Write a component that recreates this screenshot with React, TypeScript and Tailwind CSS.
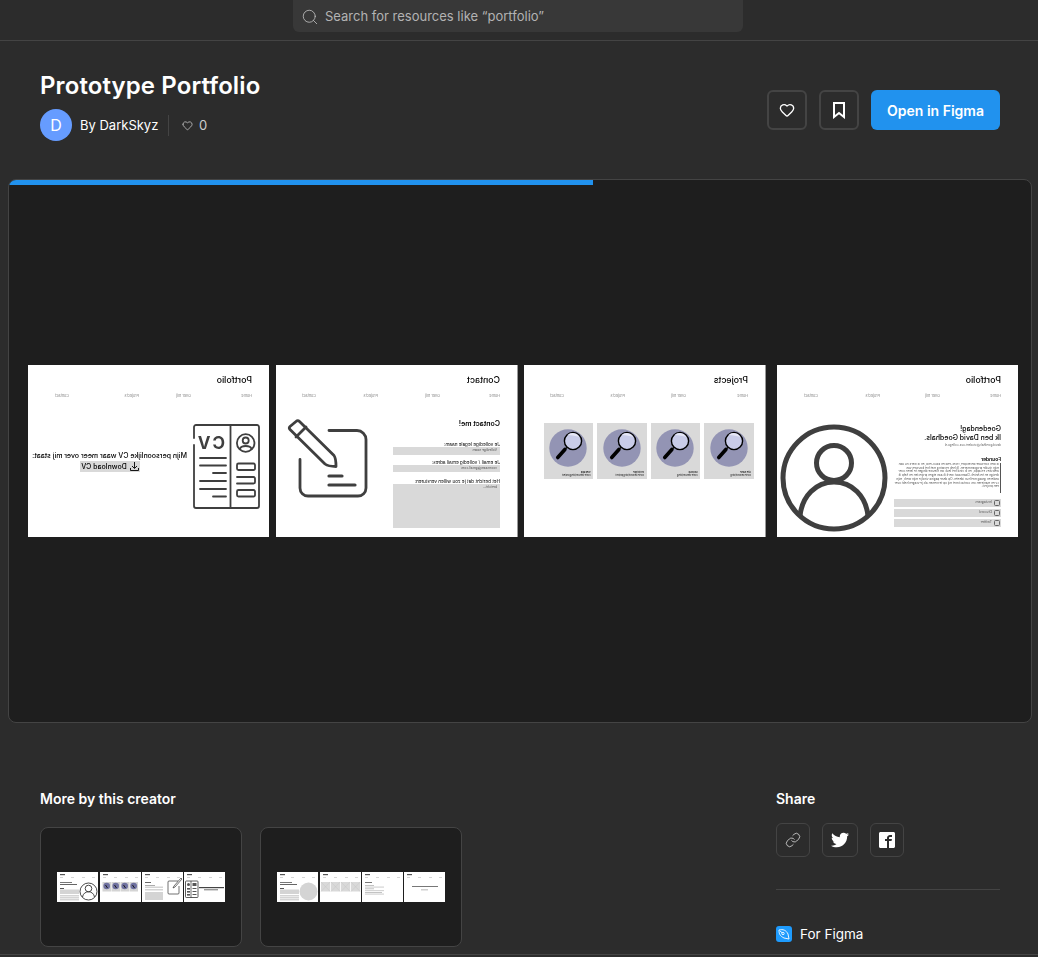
import React from "react";
import { Search, Heart, Link as LinkIcon } from "lucide-react";
import { FaTwitter } from "react-icons/fa";
import { ImFacebook2 } from "react-icons/im";

const Nav = ({ items, widths }: { items: string[]; widths: number[] }) => (
  <div className="flex mt-[7px] text-[3.800px] leading-[5px] text-[#888] blur-[0.25px]">
    {items.map((t, i) => (
      <div key={t} style={{ width: widths[i] }}>{t}</div>
    ))}
  </div>
);

const Slide = ({ title, widths, edge, children, items }: { title: string; widths: number[]; edge?: boolean; children: React.ReactNode; items: string[] }) => (
  <div className={`h-[172px] shrink-0 bg-white -scale-x-100 flex flex-col pt-[9px] pl-[17px] text-black overflow-hidden ${edge ? "border-l border-[#9a9a9a] w-[242px]" : "w-[241px]"}`}>
    <div className="text-[8.800px] leading-[12px] font-medium blur-[0.15px]">{title}</div>
    <Nav items={items} widths={widths} />
    {children}
  </div>
);

const CvIcon = () => (
  <svg viewBox="0 0 67 85" className="w-[67px] h-[85px] shrink-0" fill="none" stroke="#3f3f3f" strokeWidth="1.800" strokeLinecap="round">
    <path d="M66 14V3a2 2 0 0 0-2-2H3a2 2 0 0 0-2 2v79a2 2 0 0 0 2 2h61a2 2 0 0 0 2-2V21" />
    <path d="M29.500 1v83" />
    <circle cx="14.300" cy="19" r="8.800" />
    <circle cx="14.300" cy="16.500" r="3" />
    <path d="M8.500 25c1-4 10.500-4 11.600 0" />
    <rect x="5" y="39.500" width="18" height="6.500" rx="1.500" />
    <path d="M23 53h-16.500a1.500 1.500 0 0 0-1.500 1.500v3.500a1.500 1.500 0 0 0 1.500 1.500H23" />
    <rect x="5" y="66" width="18" height="6.500" rx="1.500" />
    <path d="M34 34h26M34 41.500h26M34 49h13M34 57h26M34 65h26M34 72.500h13" />
    <text x="35" y="25" fill="#3f3f3f" stroke="none" fontSize="17" fontWeight="700" letterSpacing="2" fontFamily="Inter, sans-serif">CV</text>
  </svg>
);

const NoteIcon = () => (
  <svg viewBox="0 0 81 80" className="w-[81px] h-[80px] shrink-0" fill="none" stroke="#3f3f3f" strokeWidth="2.800" strokeLinecap="round" strokeLinejoin="round">
    <path d="M39 11.500H11a9 9 0 0 0-9 9V69a8 8 0 0 0 8 8h50a8 8 0 0 0 8-8V40.500" />
    <path d="M13 66h26M26 57h13" strokeWidth="3.200" />
    <path d="M68.500 2.500 34 36.500c-1.500 2-2 7-2 11 4 0 9-1 11-2.500L78 10.500c1-1 1-2 0-3l-6-5c-1-1-2.500-1-3.500 0Z" />
    <path d="m62 8 10 10" />
  </svg>
);

const PersonIcon = () => (
  <svg viewBox="0 0 108 108" className="w-[108px] h-[108px] shrink-0" fill="none" stroke="#3f3f3f" strokeWidth="5">
    <circle cx="54" cy="54" r="51" />
    <circle cx="54" cy="39" r="17.500" />
    <path d="M20 92c2-20 16-34 34-34s32 14 34 34" />
  </svg>
);

const ProjectCard = ({ a, b }: { a: string; b: string }) => (
  <div className="w-[49.500px] h-[56px] bg-[#d9d9d9] flex flex-col shrink-0">
    <svg viewBox="0 0 49.500 45" className="w-[49.500px] h-[45px] shrink-0">
      <circle cx="25" cy="25" r="18.700" fill="#9394b4" />
      <circle cx="20" cy="18" r="8.600" fill="#c9cce9" stroke="#000" strokeWidth="1.400" />
      <path d="M13.500 14a8 8 0 0 1 12-2c-5 0-8 1-12 2Z" fill="#e6e7f6" />
      <path d="m26 24.500 2 1.500" stroke="#000" strokeWidth="1.500" />
      <path d="m28 26.500 5 9.500" stroke="#000" strokeWidth="3.600" strokeLinecap="round" transform="rotate(-14 28 26)" />
    </svg>
    <div className="pl-[3px] mt-[4px] text-[2.300px] leading-[2.700px] text-black blur-[0.15px]">
      <div className="font-medium">{a}</div>
      <div>{b}</div>
    </div>
  </div>
);

const Field = ({ label, value, h, gap }: { label: string; value: string; h: string; gap: string }) => (
  <div className={gap}>
    <div className="text-[4.700px] leading-[6px] blur-[0.2px]">{label}</div>
    <div className={`bg-[#d9d9d9] w-[107px] ${h} text-[3.400px] leading-[7px] pl-[3px] text-[#555] blur-[0.2px]`}>{value}</div>
  </div>
);

const Wide = ({ label }: { label: string }) => (
  <div className="w-[107px] h-[8px] bg-[#d9d9d9] flex items-center gap-[2px] text-[3.500px] text-[#555] mb-[2px] pl-[1px] blur-[0.2px]">
    <span className="w-[6px] h-[6px] rounded-[1.500px] border-[0.5px] border-[#666] shrink-0" />
    {label}
  </div>
);

const Thumb = ({ children }: { children: React.ReactNode }) => (
  <svg viewBox="0 0 41 30" className="w-[41px] h-[30px] shrink-0 bg-white" fill="none">
    <rect x="3" y="2" width="5" height="1.200" fill="#555" />
    <rect x="3" y="5" width="3" height=".6" fill="#bbb" />
    <rect x="14" y="5" width="3" height=".6" fill="#bbb" />
    <rect x="25" y="5" width="3" height=".6" fill="#bbb" />
    <rect x="35" y="5" width="3" height=".6" fill="#bbb" />
    {children}
  </svg>
);

const TextBlock = () => (
  <>
    <rect x="3" y="10" width="12" height="1" fill="#777" />
    <rect x="3" y="12" width="17" height="1" fill="#666" />
    <rect x="3" y="16" width="4" height="1" fill="#555" />
    <rect x="3" y="17.500" width="19" height="4.500" fill="#d4d4d4" />
    <rect x="3" y="23" width="19" height="1.500" fill="#d4d4d4" />
    <rect x="3" y="25" width="19" height="1.500" fill="#d4d4d4" />
    <rect x="3" y="27" width="19" height="1.500" fill="#d4d4d4" />
  </>
);

const Row1 = () => (
  <div className="flex">
    <div className="mr-[2px]">
      <Thumb>
        <TextBlock />
        <circle cx="31.500" cy="19.500" r="8.500" stroke="#333" strokeWidth=".9" />
        <circle cx="31.500" cy="16.500" r="3.300" stroke="#333" strokeWidth=".9" />
        <path d="M25.500 25c1-7 11-7 12 0" stroke="#333" strokeWidth=".9" />
      </Thumb>
    </div>
    <div className="mr-[1px]">
      <Thumb>
        {[2.500, 11.500, 20.500, 29.500].map((x) => (
          <g key={x}>
            <rect x={x} y="10" width="8.500" height="9.500" fill="#d4d4d4" />
            <circle cx={x + 4.200} cy="14" r="3.300" fill="#6f71a0" />
            <path d={`M${x + 3} ${13}l2 3`} stroke="#111" strokeWidth=".9" />
          </g>
        ))}
      </Thumb>
    </div>
    <div className="mr-[1px]">
      <Thumb>
        <rect x="3" y="10" width="6" height="1" fill="#666" />
        <rect x="3" y="13" width="10" height=".7" fill="#888" />
        <rect x="3" y="14.500" width="18" height="1.500" fill="#d4d4d4" />
        <rect x="3" y="17" width="18" height="1.500" fill="#d4d4d4" />
        <rect x="3" y="20" width="18" height="8" fill="#d4d4d4" />
        <path d="M36 9h-9a1 1 0 0 0-1 1v11a1 1 0 0 0 1 1h9a1 1 0 0 0 1-1v-7" stroke="#333" strokeWidth=".7" />
        <path d="M39 6l-7 8-1 2 2-1 7-8Z" stroke="#333" strokeWidth=".7" />
      </Thumb>
    </div>
    <Thumb>
      <rect x="1.500" y="9" width="12.500" height="16.500" rx=".8" stroke="#333" strokeWidth=".8" />
      <path d="M7 9v16.500" stroke="#333" strokeWidth=".7" />
      <rect x="3" y="11" width="3" height="3" rx="1.500" fill="#555" />
      <rect x="3" y="16" width="3" height="1.600" fill="#555" />
      <rect x="3" y="19" width="3" height="1.600" fill="#555" />
      <rect x="3" y="22" width="3" height="1.600" fill="#555" />
      <rect x="8.500" y="11" width="4" height="3" fill="#555" />
      <rect x="8.500" y="16" width="4" height="1" fill="#555" />
      <rect x="8.500" y="19" width="4" height="1" fill="#555" />
      <rect x="8.500" y="22" width="4" height="1" fill="#555" />
      <rect x="15" y="15" width="25" height="1.200" fill="#444" />
      <rect x="20" y="17" width="14" height="1.400" fill="#999" />
    </Thumb>
  </div>
);

const Row2 = () => (
  <div className="flex">
    <div className="mr-[2px]">
      <Thumb>
        <TextBlock />
        <circle cx="31.500" cy="19.500" r="9" fill="#d4d4d4" />
      </Thumb>
    </div>
    <div className="mr-[1px]">
      <Thumb>
        {[1, 11, 21, 31].map((x) => (
          <g key={x}>
            <rect x={x} y="10" width="9.200" height="9.500" fill="#d9d9d9" />
            <path d={`M${x} 10l9.200 9.500M${x + 9.200} 10l-9.200 9.500`} stroke="#bbb" strokeWidth=".3" />
          </g>
        ))}
      </Thumb>
    </div>
    <div className="mr-[1px]">
      <Thumb>
        <rect x="3" y="10" width="7" height="1" fill="#777" />
        <rect x="3" y="13" width="9" height=".7" fill="#aaa" />
        <rect x="3" y="14.500" width="19" height="1.200" fill="#d4d4d4" />
        <rect x="3" y="16.500" width="9" height=".7" fill="#aaa" />
        <rect x="3" y="18" width="19" height="1.200" fill="#d4d4d4" />
        <rect x="3" y="20" width="17" height=".7" fill="#aaa" />
        <rect x="3" y="21.500" width="19" height="1.200" fill="#d4d4d4" />
      </Thumb>
    </div>
    <Thumb>
      <rect x="8" y="14" width="26" height="1" fill="#777" />
      <rect x="17" y="17" width="7" height="1.500" fill="#cfcfcf" />
    </Thumb>
  </div>
);

const CreatorCard = ({ children }: { children: React.ReactNode }) => (
  <div className="w-[202px] h-[120px] rounded-lg border border-[#444] bg-[#1e1e1e] flex items-center justify-center">
    {children}
  </div>
);

const ShareBtn = ({ w, children }: { w: string; children: React.ReactNode }) => (
  <div className={`${w} h-[34px] rounded-md border border-[#444] flex items-center justify-center text-white`}>{children}</div>
);

const NAV = ["Home", "Over mij", "Projects", "Contact"];

export default function App() {
  return (
    <div className="w-[1038px] h-[957px] overflow-hidden bg-[#2c2c2c]">
      <div className="w-[1040px] h-[957px] font-['Inter',sans-serif] text-white flex flex-col">
        <header className="h-[41px] shrink-0 border-b border-[#444] flex pl-[293px]">
          <div className="w-[450px] h-[32px] bg-[#383838] rounded-b-md flex items-center pl-[8px] pt-[1px] gap-[6px] text-[13px] text-[#b3b3b3]">
            <Search size={18} strokeWidth={1} className="text-[#ccc]" />
            <span>Search for resources like “portfolio”</span>
          </div>
        </header>

        <section className="px-10 flex justify-between items-start pt-[29px]">
          <div>
            <h1 className="text-[24px] leading-[32px] font-semibold tracking-[0.1px]">Prototype Portfolio</h1>
            <div className="flex items-center mt-[7px] h-[32px]">
              <div className="w-[32px] h-[32px] rounded-full bg-[#669cff] flex items-center justify-center text-[16px]">D</div>
              <span className="ml-[8px] w-[77px] whitespace-nowrap text-[13px] pt-[1px]">By DarkSkyz</span>
              <span className="ml-[11px] w-px h-[21px] bg-[#444]" />
              <Heart size={11} strokeWidth={1.500} className="ml-[13px] text-[#ddd]" />
              <span className="ml-[6px] text-[13px] pt-[1px] text-[#ccc]">0</span>
            </div>
          </div>
          <div className="flex gap-3 mt-[20px]">
            <div className="w-[40px] h-[40px] rounded-md border-2 border-[#444] flex items-center justify-center">
              <Heart size={16} strokeWidth={2} />
            </div>
            <div className="w-[40px] h-[40px] rounded-md border-2 border-[#444] flex items-center justify-center">
              <svg width="12" height="17" viewBox="0 0 12 17" fill="none" stroke="#fff" strokeWidth="2">
                <path d="M1 1h10v14l-5-4-5 4Z" />
              </svg>
            </div>
            <div className="w-[129px] h-[40px] rounded-md bg-[#2192ee] flex items-center justify-center text-[14px] font-semibold">Open in Figma</div>
          </div>
        </section>

        <section className="mx-2 mt-[38px] h-[544px] shrink-0 rounded-lg border border-[#444] bg-[#1e1e1e] overflow-hidden flex flex-col">
          <div className="h-[5px] w-[584px] bg-[#2192ee] shrink-0" />
          <div className="flex-1 flex items-center pl-[19px] pb-[5px]">
            <div className="mr-[7px]">
              <Slide title="Portfolio" items={NAV} widths={[61, 52, 70, 30]}>
                <div className="flex items-start mt-[26px] -ml-[8px]">
                  <CvIcon />
                  <div className="ml-[6px] mt-[26px] w-[154px] text-center text-[7px] font-medium leading-[11px] whitespace-nowrap blur-[0.2px]">
                    <div>Mijn persoonlijke CV waar meer over mij staat:</div>
                    <div className="mx-auto w-[60px] h-[11px] bg-[#d9d9d9] flex items-center justify-center gap-[3px]">
                      <svg width="9" height="9" viewBox="0 0 9 9" fill="none" stroke="#000" strokeWidth=".9"><path d="M4.500 0v6M2 4l2.500 2.500L7 4M.5 6v2.500h8V6" /></svg>
                      Download CV
                    </div>
                  </div>
                </div>
              </Slide>
            </div>
            <div className="mr-[6px]">
              <Slide edge title="Contact" items={NAV} widths={[60, 62, 62, 30]}>
                <div className="flex items-start mt-[14px]">
                  <div className="w-[107px] mr-[-2px]">
                    <div className="text-[7px] leading-[10px] font-semibold mt-[7px] mb-[12px] blur-[0.15px]">Contact me!</div>
                    <Field gap="mb-[4px]" label="Je volledige legale naam:" value="Volledige naam" h="h-[8px]" />
                    <Field gap="mb-[6px]" label="Je email / volledig email adres:" value="voornaam@gmail.com" h="h-[7px]" />
                    <Field gap="mb-0" label="Het bericht dat je zou willen versturen:" value="bericht..." h="h-[44px]" />
                  </div>
                  <div className="ml-[27px] mt-[7px]"><NoteIcon /></div>
                </div>
              </Slide>
            </div>
            <div className="mr-[11px]">
              <Slide edge title="Projects" items={NAV} widths={[62, 61, 61, 30]}>
                <div className="flex gap-[4px] mt-[25px] -ml-[6px]">
                  <ProjectCard a="Site name" b="Korte omschrijving" />
                  <ProjectCard a="Mockup" b="Korte omschrijving" />
                  <ProjectCard a="Prototype" b="Korte omschrijving project" />
                  <ProjectCard a="Web app" b="Korte omschrijving project" />
                </div>
              </Slide>
            </div>
            <Slide title="Portfolio" items={NAV} widths={[61, 60, 62, 30]}>
              <div className="flex items-start mt-[26px]">
                <div className="w-[107px] shrink-0">
                  <div className="text-[7px] leading-[9px] font-medium blur-[0.15px]">Goedendag!<br />Ik ben David Goedhals.</div>
                  <div className="text-[3px] leading-[6px] text-[#666] blur-[0.2px]">david.goedhals@student.uva-collega.nl</div>
                  <div className="text-[5px] leading-[7px] font-semibold mt-[8px] blur-[0.1px]">Founder</div>
                  <p className="h-[30px] overflow-hidden text-[3.100px] leading-[3.700px] border-l border-[#555] pl-[1px] mb-[6px] text-[#555] blur-[0.2px]">
                    Ik ben software developer, front-end en back-end, en ik werk nu aan mijn studie programmeren. Ik heb ervaring met het bouwen van websites en apps, en ik vind het leuk om nieuwe dingen te leren over design en techniek. Daarnaast werk ik aan eigen projecten en help ik anderen graag met hun ideeën. Op deze pagina vind je mijn werk, mijn cv en manieren om contact met mij op te nemen als je vragen hebt over een project.
                  </p>
                  <Wide label="Instagram" />
                  <Wide label="Discord" />
                  <Wide label="Twitter" />
                </div>
                <div className="ml-[6px]"><PersonIcon /></div>
              </div>
            </Slide>
          </div>
        </section>

        <section className="px-10 mt-[66px] flex justify-between items-start">
          <div>
            <h2 className="text-[14px] leading-[20px] font-semibold">More by this creator</h2>
            <div className="flex gap-[18px] mt-[18px]">
              <CreatorCard><Row1 /></CreatorCard>
              <CreatorCard><Row2 /></CreatorCard>
            </div>
          </div>
          <div className="w-[224px]">
            <h2 className="text-[14px] leading-[20px] font-semibold">Share</h2>
            <div className="flex gap-3 mt-[14px]">
              <ShareBtn w="w-[34px]"><LinkIcon size={16} strokeWidth={1} /></ShareBtn>
              <ShareBtn w="w-[36px]"><FaTwitter size={18} /></ShareBtn>
              <ShareBtn w="w-[34px]"><ImFacebook2 size={16} /></ShareBtn>
            </div>
            <div className="h-px bg-[#444] mt-[32px]" />
            <div className="flex items-center gap-2 mt-[34px] text-[13.500px] leading-[20px]">
              <div className="w-4 h-4 rounded-[3px] bg-[#1e9bfd] flex items-center justify-center">
                <svg width="12" height="12" viewBox="0 0 12 12" fill="none" stroke="#fff" strokeWidth=".9">
                  <path d="M1 2c4-1 7 0 9 4l1 5-5-1C2 8 1 6 1 2Z" />
                  <circle cx="5" cy="5.500" r="1.200" />
                  <path d="M2 3l2.200 1.800" />
                </svg>
              </div>
              For Figma
            </div>
          </div>
        </section>
        <div className="mt-[7px] h-px bg-[#444] shrink-0" />
      </div>
    </div>
  );
}
